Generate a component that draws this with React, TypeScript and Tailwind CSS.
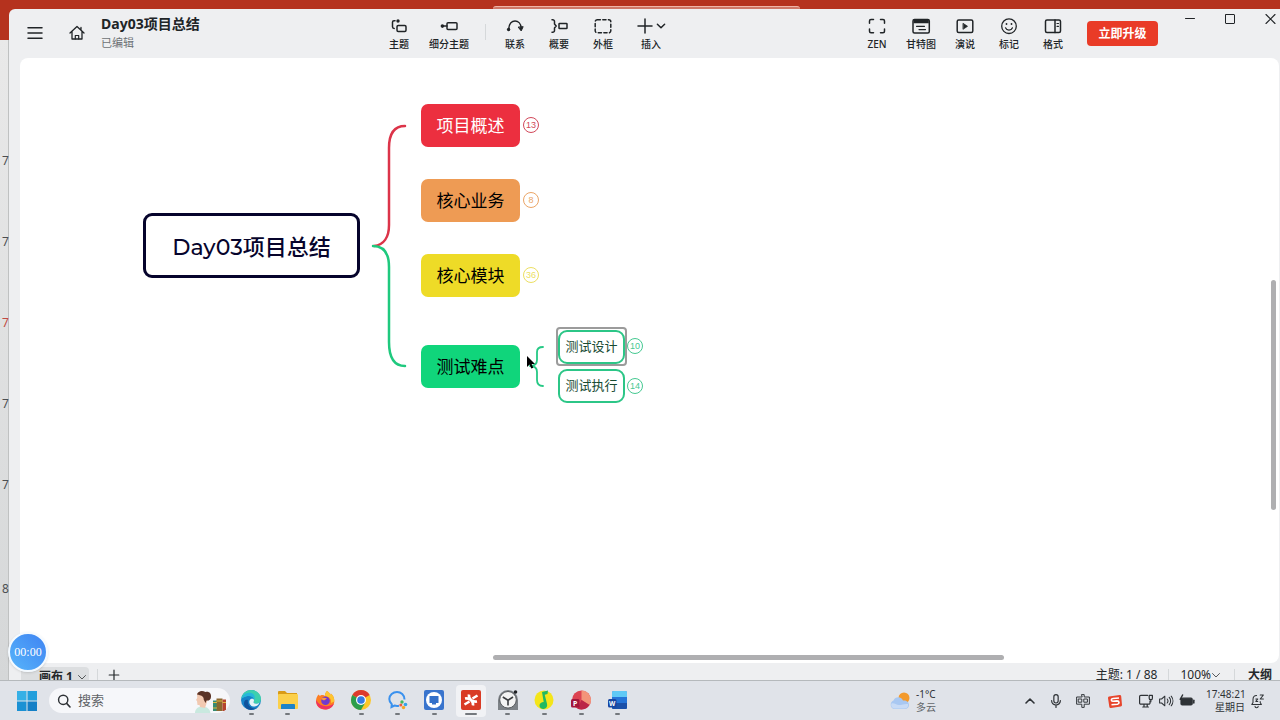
import type { ReactNode } from "react";

const rowNumbers = ["7", "7", "7", "7", "7"];

const branches = [
  { title: "项目概述", count: 13, box: "top-[46px] bg-[#ec2f3f] text-white", badge: "top-[59px] border-[#d2485a] text-[#d2485a]" },
  { title: "核心业务", count: 8, box: "top-[121px] bg-[#ee9b54] text-black", badge: "top-[134px] border-[#eba567] text-[#eba567]" },
  { title: "核心模块", count: 36, box: "top-[196px] bg-[#eedb27] text-black", badge: "top-[209px] border-[#ecdf62] text-[#ecdf62]" },
  { title: "测试难点", count: 0, box: "top-[287px] bg-[#10d57b] text-black", badge: "" },
];

const children = [
  { title: "测试设计", count: 10, box: "top-[272px]", badge: "top-[280px]" },
  { title: "测试执行", count: 14, box: "top-[311px]", badge: "top-[320px]" },
];

function Icon({ children, className = "size-5" }: { children: ReactNode; className?: string }) {
  return (
    <svg
      viewBox="0 0 20 20"
      className={className}
      fill="none"
      stroke="currentColor"
      strokeWidth="1.5"
      strokeLinecap="round"
      strokeLinejoin="round"
      aria-hidden="true"
    >
      {children}
    </svg>
  );
}

function Tool({ label, width = "w-11", children }: { label: string; width?: string; children: ReactNode }) {
  return (
    <button type="button" className={`${width} flex shrink-0 flex-col items-center text-[#202427]`}>
      <span className="flex h-5 items-center">{children}</span>
      <span className="text-[10px] leading-4 font-medium whitespace-nowrap">{label}</span>
    </button>
  );
}

function Header() {
  return (
    <header className="flex h-[49px] shrink-0 items-start text-[#202427]">
      <div className="flex h-12 w-[370px] shrink-0 items-center pl-4">
        <button type="button" aria-label="Menu">
          <Icon>
            <path d="M3 4.700h14M3 10h14M3 15.200h14" />
          </Icon>
        </button>
        <button type="button" aria-label="Home" className="ml-[22px]">
          <Icon>
            <path d="M3 10 10 3.500l7 6.500M5 8.500V16h10V8.500M14 4.500v2.200" strokeWidth="1.300" />
            <path d="M8.300 16v-3.500h3.400V16" strokeWidth="1.200" />
          </Icon>
        </button>
        <div className="ml-[14px] pb-px">
          <h1 className="text-sm leading-5 font-bold whitespace-nowrap">Day03项目总结</h1>
          <p className="text-[11px] leading-[18px] text-[#6d7275]">已编辑</p>
        </div>
      </div>

      <nav className="flex shrink-0 pt-[7px]">
        <Tool label="主题" width="w-10">
          <Icon>
            <rect x="8" y="9.500" width="9" height="6" rx="1.200" />
            <path d="M6 4.800H5A1.500 1.500 0 0 0 3.500 6.300v4.500A1.700 1.700 0 0 0 5.200 12.500" />
            <circle cx="9" cy="5" r="1.700" fill="currentColor" stroke="none" />
          </Icon>
        </Tool>
        <Tool label="细分主题" width="w-15">
          <Icon>
            <rect x="8" y="6.800" width="10" height="6.600" rx="1" />
            <path d="M4 10.100h4" />
            <circle cx="3.400" cy="10.100" r="1.800" fill="currentColor" stroke="none" />
          </Icon>
        </Tool>
        <span className="mr-[7px] ml-[6px] mt-2 h-4 w-px bg-[#d5d8da]" />
        <Tool label="联系">
          <Icon>
            <path d="M3.800 12.500C4.500 2.500 15.500 2.500 16.200 12" />
            <path d="m13.400 11.400 2.800 3.500 1.800-3.900z" fill="currentColor" strokeWidth="1" />
            <circle cx="3.600" cy="13.500" r="1.700" fill="currentColor" stroke="none" />
          </Icon>
        </Tool>
        <Tool label="概要">
          <Icon>
            <path d="M3 3.800h.7A1.800 1.800 0 0 1 5.500 5.600v2.500L7.200 10l-1.700 1.900v2.500a1.800 1.800 0 0 1-1.800 1.800H3" />
            <rect x="10" y="7.500" width="8" height="5" rx=".6" />
          </Icon>
        </Tool>
        <Tool label="外框">
          <Icon>
            <rect x="2.200" y="3.800" width="15.600" height="13" rx="2" strokeDasharray="3.200 2.400" />
          </Icon>
        </Tool>
        <Tool label="插入" width="w-[52px]">
          <span className="flex items-center">
            <Icon>
              <path d="M10 3v14M3 10h14" />
            </Icon>
            <Icon className="size-3">
              <path d="m4 7 6 6 6-6" strokeWidth="2.500" />
            </Icon>
          </span>
        </Tool>
      </nav>

      <div className="ml-auto flex shrink-0 items-start">
        <div className="flex pt-[7px]">
          <Tool label="ZEN">
            <Icon>
              <path d="M2.500 7.200V5a1.500 1.500 0 0 1 1.500-1.500h2.500M13.500 3.500H16A1.500 1.500 0 0 1 17.500 5v2.200M17.500 13v2.200a1.500 1.500 0 0 1-1.500 1.500h-2.500M6.500 16.700H4a1.500 1.500 0 0 1-1.500-1.500V13" />
            </Icon>
          </Tool>
          <Tool label="甘特图">
            <Icon>
              <rect x="2" y="3.500" width="16.300" height="13.500" rx="1.500" />
              <path d="M2.500 4h15.300v3.200H2.500z" fill="currentColor" stroke="none" />
              <path d="M5.500 10.300h8M8 13.600h6.500" strokeWidth="1.200" />
            </Icon>
          </Tool>
          <Tool label="演说">
            <Icon>
              <rect x="2.200" y="4" width="15.600" height="12.600" rx="1.500" />
              <path d="m8.300 7.500 4.200 2.800-4.200 2.800z" fill="currentColor" strokeWidth=".8" />
            </Icon>
          </Tool>
          <Tool label="标记">
            <Icon>
              <circle cx="10" cy="10.200" r="7.300" strokeWidth="1.300" />
              <path d="M6.500 11.800a3.800 3.800 0 0 0 7 0" strokeWidth="1.200" />
              <circle cx="7.500" cy="8" r=".9" fill="currentColor" stroke="none" />
              <circle cx="12.500" cy="8" r=".9" fill="currentColor" stroke="none" />
            </Icon>
          </Tool>
          <Tool label="格式">
            <Icon>
              <rect x="2.500" y="4" width="15" height="12.600" rx="1.500" />
              <path d="M12 4v12.600" />
              <path d="M14 7.500h1.500M14 10.300h1.500" strokeWidth="1.200" />
            </Icon>
          </Tool>
        </div>
        <button type="button" className="mt-3 ml-3 h-[25px] w-[71px] rounded-[4px] bg-[#e93b27] text-xs font-bold text-white">
          立即升级
        </button>
        <div className="ml-[22px] flex gap-5">
          <button type="button" aria-label="Minimize">
            <Icon>
              <path d="M5.500 9.500h9" strokeWidth="1" />
            </Icon>
          </button>
          <button type="button" aria-label="Maximize">
            <Icon>
              <rect x="5.500" y="5.500" width="9" height="9" rx=".5" strokeWidth="1" />
            </Icon>
          </button>
          <button type="button" aria-label="Close">
            <Icon>
              <path d="m6 5.500 9 9m0-9-9 9" strokeWidth="1.100" />
            </Icon>
          </button>
        </div>
      </div>
    </header>
  );
}

function MindMap() {
  return (
    <main className="relative mr-px ml-[11px] min-h-0 flex-1 overflow-hidden rounded-lg bg-white">
      <svg className="absolute inset-0 size-full" fill="none" strokeWidth="2.500" strokeLinecap="round" aria-hidden="true">
        <path d="M354 188C364 187 369 179 369 167V90C369 76 374 68 385 68" stroke="#dc3449" />
        <path d="M353 188C364 188 369 196 369 209V284C369 300 374 308 385 308" stroke="#1fc97e" />
        <path
          d="M510 308C515 308 517 306 517 302V294C517 291 519 289 523 289M510 308C515 308 517 310 517 314V322C517 326 519 328 523 328"
          stroke="#26c985"
          strokeWidth="1.800"
        />
      </svg>

      <div className="absolute top-[155px] left-[123px] flex h-[65px] w-[217px] items-center justify-center rounded-[9px] border-3 border-[#06042c] pt-[3px] font-[Montserrat,Inter,'Noto_Sans_CJK_SC',sans-serif] text-[22px] font-medium whitespace-nowrap text-[#06042c]">
        Day03项目总结
      </div>

      {branches.map((b) => (
        <div key={b.title}>
          <div className={`${b.box} absolute left-[401px] flex h-[43px] w-[99px] items-center justify-center rounded-[7px] pt-px text-[17px]`}>
            {b.title}
          </div>
          {b.count > 0 && (
            <button
              type="button"
              className={`${b.badge} absolute left-[503px] flex size-4 items-center justify-center rounded-full border font-['Liberation_Sans',sans-serif] text-[9px] leading-none`}
            >
              {b.count}
            </button>
          )}
        </div>
      ))}

      <div className="absolute top-[269px] left-[536px] h-[39px] w-[71px] rounded-[4px] border-2 border-[#9b9b9b]" />
      {children.map((c) => (
        <div key={c.title}>
          <div className={`${c.box} absolute left-[538px] flex h-[34px] w-[67px] items-center justify-center rounded-[9px] border-2 border-[#2cc687] bg-white text-[13px] text-[#174b32]`}>
            {c.title}
          </div>
          <button
            type="button"
            className={`${c.badge} absolute left-[607px] flex size-4 items-center justify-center rounded-full border border-[#45c991] font-['Liberation_Sans',sans-serif] text-[9px] leading-none text-[#45c991]`}
          >
            {c.count}
          </button>
        </div>
      ))}

      {/* mouse pointer */}
      <svg viewBox="0 0 10 15" className="absolute top-[297px] left-[506px] h-[15px] w-[10px]" aria-hidden="true">
        <path d="M1 1v11l2.600-2.400 1.700 4 2-.9-1.700-3.800H9z" fill="#000" />
      </svg>

      <div className="absolute top-[222px] right-[3px] h-[230px] w-[5px] rounded-full bg-[#afafb1]" />
      <div className="absolute bottom-[3px] left-[473px] h-[5px] w-[511px] rounded-full bg-[#afafb1]" />
    </main>
  );
}

function SheetBar() {
  return (
    <footer className="h-[17px] shrink-0 overflow-hidden text-xs text-[#24282b]">
      <div className="flex h-6 items-center pr-2 pl-3">
        <button type="button" className="mt-1 flex h-5 w-[68px] items-center gap-1 rounded-t-sm bg-[#dcdee0] pl-[18px] leading-4 font-bold whitespace-nowrap">
          画布 1
          <Icon className="size-[10px]">
            <path d="m3 7 7 7 7-7" />
          </Icon>
        </button>
        <span className="ml-2 h-3 w-px bg-[#d5d8da]" />
        <button type="button" aria-label="Add sheet" className="ml-2">
          <Icon className="size-4">
            <path d="M10 4v12M4 10h12" />
          </Icon>
        </button>
        <span className="ml-auto leading-4">主题: 1 / 88</span>
        <span className="mx-[11px] h-3 w-px bg-[#d5d8da]" />
        <button type="button" className="flex items-center leading-4">
          100%
          <Icon className="size-[10px]">
            <path d="m3 7 7 7 7-7" />
          </Icon>
        </button>
        <span className="mx-[13px] h-3 w-px bg-[#d5d8da]" />
        <button type="button" className="leading-4 font-bold">大纲</button>
      </div>
    </footer>
  );
}

const apps = [
  {
    name: "Edge",
    running: true,
    icon: (
      <>
        <circle cx="10" cy="10" r="10" fill="#1682c9" />
        <path d="M.3 9C1 3.500 5 0 10 0c6 0 10 4.200 10 8.700 0 3-2 5-4.600 5-2.200 0-3.500-1-2.500-2.500C13.600 8 11.500 6 8.200 6 4 6 1 8 .3 9z" fill="#3dd0ae" />
        <path d="M.3 9C1.500 4.500 5 2.500 8.800 2.700 13 3 15 6.500 13 10.500 13 7.500 11 6 8.200 6 4 6 1 8 .3 9z" fill="#25b6dc" />
        <path d="M7 10c-1 4 2 8.500 7 8.400 1.500 0 3-1 4-2.400C16.500 18.600 13.500 20 10 20 6 20 3 17 3 13.500S5 9 7 10z" fill="#10529c" />
        <path d="M12.900 11.200c-1 1.500.3 2.500 2.500 2.500 1.200 0 2.300-.4 3.200-1.200-1 3.300-4 4.500-6.600 4-3-.6-4.600-4-3.200-6.500 1-1.800 4-1.600 4.200.2z" fill="#e6f3f8" />
      </>
    ),
  },
  {
    name: "Explorer",
    running: true,
    icon: (
      <>
        <path d="M0 2a1 1 0 0 1 1-1h6l2 2h10v5H0z" fill="#d99b16" />
        <rect y="4" width="20" height="15" rx="1" fill="#fbd04b" />
        <path d="M3 15a1 1 0 0 1 1-1h12a1 1 0 0 1 1 1v4H3z" fill="#1c83c9" />
      </>
    ),
  },
  {
    name: "Firefox",
    running: false,
    icon: (
      <>
        <path d="M12 1c2 1 3 3 3.400 4 .6-.5.400-1.500.4-1.500C18 5 19.500 8 19.300 11.500 19 16 15 19.500 10.300 19.500 5 19.500 1 16 1 11c0-3 1.300-5 2.500-6.500L5 6c1-1.500 4-1 5 0 0-2 .6-4 2-5z" fill="#fd7e23" />
        <path d="M1 10c0 6 4 9.500 9.300 9.500 4 0 7.500-2.500 8.600-6C13 18 5 17 1 10z" fill="#ee3262" />
        <path d="M12 1c2 1 3 3 3.400 4 .6-.5.400-1.500.4-1.500C18 5 19.500 8 19.300 11.500L16 13c.5-4-1-6-6-7 0-2 .6-4 2-5z" fill="#fdc530" />
        <circle cx="10.500" cy="10.800" r="4.300" fill="#7139cf" />
        <path d="M6 9c2-2 4-1.500 6-.5L9 10.500z" fill="#ff9a3c" />
      </>
    ),
  },
  {
    name: "Chrome",
    running: true,
    icon: (
      <>
        <circle cx="10" cy="10" r="10" fill="#fcc728" />
        <path d="M10 10 1.340 5A10 10 0 0 1 18.660 5z" fill="#dd3b2d" />
        <path d="M10 10 1.340 5A10 10 0 0 0 10 20l4.300-7.500z" fill="#2b9e4b" />
        <circle cx="10" cy="10" r="5" fill="#fff" />
        <circle cx="10" cy="10" r="3.800" fill="#367be2" />
      </>
    ),
  },
  {
    name: "WeCom",
    running: true,
    icon: (
      <>
        <path d="M16.500 9.500C16.500 5 13 2 9 2S1.300 5 1.300 9c0 2 1 4 2.500 5.300L3.500 17l3-1.500c1.500.5 3 .5 4.500.2" fill="none" stroke="#3a91ee" strokeWidth="2" />
        <circle cx="14" cy="12" r="1.700" fill="#41b85c" />
        <circle cx="17.500" cy="14.500" r="1.800" fill="#35a2e8" />
        <circle cx="15.500" cy="17.500" r="1.700" fill="#f5a623" />
        <circle cx="12.800" cy="15" r="1.500" fill="#ec5b3c" />
      </>
    ),
  },
  {
    name: "Classroom",
    running: true,
    icon: (
      <>
        <rect width="20" height="20" rx="2" fill="#3974cd" />
        <circle cx="10" cy="10" r="8" fill="#fff" />
        <path d="M5.500 6h9v7h-9zM8 13h4v1.500H8z" fill="#3470c9" />
      </>
    ),
  },
  {
    name: "Xmind",
    running: true,
    icon: (
      <>
        <rect width="20" height="20" rx="2" fill="#d93b25" />
        <path
          d="M4 8.500C7 8 8.500 9 10 10c1.500 1 3 2 6 1.500M8 4.500c-.5 2.500.5 4 2 5.500s2.500 3 2 5.500M16.500 5.500 11.500 8.500M3.500 14.500l5-3"
          fill="none"
          stroke="#fff"
          strokeWidth="2.600"
        />
      </>
    ),
  },
  {
    name: "Clock",
    running: true,
    icon: (
      <>
        <path d="M0 20V10a10 10 0 0 1 20 0v10z" fill="#7d8287" />
        <circle cx="10" cy="9.800" r="8.300" fill="#f3f3f3" stroke="#55585c" />
        <path d="m4.800 7 5.200 3.200L15 7M10 10v5.500" fill="none" stroke="#3b3d40" strokeWidth="1.600" />
        <circle cx="17.500" cy="2" r="1.800" fill="#202225" />
      </>
    ),
  },
  {
    name: "QQ Music",
    running: true,
    icon: (
      <>
        <circle cx="10" cy="10" r="9.500" fill="#f4e51a" />
        <path d="m8 2 6-1.500-.5 3.500-2.800.8 2.300 9c.7 3-1 5.200-3.500 5.200-2.300 0-4-1.500-4-3.500 0-2.300 2-3.500 4.200-3.500z" fill="#20b961" />
      </>
    ),
  },
  {
    name: "PowerPoint",
    running: true,
    icon: (
      <>
        <circle cx="10.500" cy="10" r="9.500" fill="#dc4352" />
        <path d="M10.500.5a9.500 9.500 0 0 1 8 14.500l-8-5z" fill="#f39479" />
        <path d="m10.500 10 8 5a9.500 9.500 0 0 1-12 3.500z" fill="#bb2546" />
        <rect x="0" y="9" width="8.500" height="8.500" rx="1.500" fill="#a3163b" />
        <text x="2" y="15.700" fontSize="7" fontWeight="700" fill="#fff">P</text>
      </>
    ),
  },
  {
    name: "Word",
    running: true,
    icon: (
      <>
        <rect x="4" y="1" width="15" height="18" rx="1.500" fill="#2574d8" />
        <path d="M5.500 1h12A1.500 1.500 0 0 1 19 2.500V7H4V2.500A1.500 1.500 0 0 1 5.500 1z" fill="#5fc9f6" />
        <path d="M4 13h15v4.500a1.500 1.500 0 0 1-1.500 1.500h-12A1.500 1.500 0 0 1 4 17.500z" fill="#1b50a9" />
        <rect x="0" y="9" width="8.500" height="8.500" rx="1.500" fill="#1745a0" />
        <text x="1" y="15.500" fontSize="6.500" fontWeight="700" fill="#fff">W</text>
      </>
    ),
  },
];

function Taskbar() {
  return (
    <div className="flex h-10 shrink-0 items-center border-t border-[#b5b9bc] bg-[#e0e3e9] pl-[17px] text-[#2e3236]">
      <button type="button" aria-label="Start">
        <svg viewBox="0 0 20 20" className="size-5" aria-hidden="true">
          <path d="M0 0h9.500v9.500H0z" fill="#36b0e6" />
          <path d="M10.500 0H20v9.500h-9.500z" fill="#239fdc" />
          <path d="M0 10.500h9.500V20H0z" fill="#1a91d4" />
          <path d="M10.500 10.500H20V20h-9.500z" fill="#147fc6" />
        </svg>
      </button>
      <label className="ml-3 flex h-[25px] w-[181px] shrink-0 items-center overflow-hidden rounded-full bg-[#f6f7fa] pr-[2px] pl-[7px]">
        <span className="sr-only">搜索</span>
        <Icon className="size-4 shrink-0">
          <circle cx="9" cy="8.500" r="5.800" strokeWidth="1.800" />
          <path d="m13.300 13 4.200 4.500" strokeWidth="2" />
        </Icon>
        <input
          type="search"
          placeholder="搜索"
          className="ml-[6px] w-0 min-w-0 flex-1 bg-transparent text-[13px] outline-none placeholder:text-[#5f6367]"
        />
        <svg viewBox="0 0 34 24" className="h-6 w-[34px] shrink-0" aria-hidden="true">
          <path d="M1 24c0-4 3-6.500 7-6.500s8 2 8.500 6.500z" fill="#c9e9df" />
          <path d="M3 4.500C5 2 10 2 12 5l2 5-3 9-5-1-.5-2H3.500L3 12l-1-1 1.200-2z" fill="#f2c9b1" />
          <path d="M3 5.500C4 2 8 1 11.500 3c3.500-1 6 1.500 5.500 5-.3 3-2.500 4-4.500 3.500L11.500 14l-1.800-3.500C10 7 7 6.500 3 5.500z" fill="#5a3326" />
          <path d="M19 11.500h4V22h-4z" fill="#358c72" />
          <path d="M22.500 9.500h6V22h-6z" fill="#8b6930" />
          <path d="M28.500 10.500H32V22h-3.500z" fill="#b5452f" />
          <path d="M19 13.500h4M22.500 12h6M28.500 13.500H32M19 19h4" stroke="#e0b83e" />
        </svg>
      </label>

      <div className="ml-[3px] grid h-full w-[403px] shrink-0 grid-cols-11">
        {apps.map((app) => (
          <button
            key={app.name}
            type="button"
            aria-label={app.name}
            className="flex flex-col items-center justify-center"
          >
            <span className={`${app.name === "Xmind" ? "bg-[#f1f2f5]" : ""} flex h-8 w-[30px] flex-col items-center rounded-sm pt-[5px]`}>
              <svg viewBox="0 0 20 20" className="size-5 shrink-0" aria-hidden="true">
                {app.icon}
              </svg>
              {app.running && (
                <span className={`${app.name === "Xmind" ? "w-3" : "w-[5px]"} mt-[3px] h-[2px] shrink-0 rounded-full bg-[#74787d]`} />
              )}
            </span>
          </button>
        ))}
      </div>

      <button type="button" className="ml-auto flex items-center gap-[5px] text-left text-[10px] leading-[13px]">
        <svg viewBox="0 0 22 20" className="h-5 w-[22px]" aria-hidden="true">
          <circle cx="15" cy="7" r="5.500" fill="#f39a2d" />
          <path d="M5 18a4.500 4.500 0 0 1-.5-8.500C6 5.500 12 5 14 9.500c3-.5 6 1 6 4.500 0 2.500-2 4-4 4z" fill="#a9c8f2" />
          <path d="M5 17.500a3.500 3.500 0 0 1-2.500-5c2.500-1 4.500 1.500 7.500 1.500s6-1.500 9-1c.5 3-1 4.500-3.500 4.500z" fill="#c8dbf6" />
        </svg>
        <span>
          <span className="block">-1°C</span>
          <span className="block text-[#63676b]">多云</span>
        </span>
      </button>

      <div className="ml-[86px] flex items-center">
        <button type="button" aria-label="Show hidden icons">
          <Icon className="size-4">
            <path d="m5 12.500 5-5 5 5" strokeWidth="2" />
          </Icon>
        </button>
        <button type="button" aria-label="Microphone" className="ml-[10px]">
          <Icon className="size-4">
            <rect x="7.300" y="2" width="5.400" height="10.500" rx="2.700" />
            <path d="M4.500 9.500a5.500 5.500 0 0 0 11 0M10 15v3" />
          </Icon>
        </button>
        <button type="button" aria-label="输入法" className="ml-[11px]">
          <Icon className="size-4">
            <path d="M8.500 2h3v3H18v9h-6.500v4h-3v-4H2V5h6.500zM4.500 7.500h4v4h-4zM11.500 7.500h4v4h-4z" strokeWidth="1.200" />
          </Icon>
        </button>
        <button type="button" aria-label="Sogou" className="ml-4">
          <svg viewBox="0 0 16 16" className="size-4" aria-hidden="true">
            <path d="M2 3.500 12.500 2a1.500 1.500 0 0 1 1.700 1.300L15 12a1.500 1.500 0 0 1-1.300 1.600L4 15a1.500 1.500 0 0 1-1.700-1.300L1 5a1.500 1.500 0 0 1 1-1.500z" fill="#e7452c" />
            <path d="M12 5 6 5.500C3.500 5.800 4 8.300 6 8.200l4-.3c2.500 0 2.700 3 .5 3.300l-6 .6" fill="none" stroke="#fff" strokeWidth="1.600" />
          </svg>
        </button>
        <button type="button" aria-label="Network" className="ml-[15px]">
          <Icon className="size-4">
            <path d="M12 3H3.500A1.500 1.500 0 0 0 2 4.500v8A1.500 1.500 0 0 0 3.500 14h10a1.500 1.500 0 0 0 1.500-1.500V10M6 17.500h7M7.500 14v3.500M11.500 14v3.500" />
            <path d="M14 3h4v3.500a1.500 1.500 0 0 1-4 0zM16 8v3" />
          </Icon>
        </button>
        <button type="button" aria-label="Volume" className="ml-1">
          <Icon className="size-4">
            <path d="M2 7.500h2.500L8.500 4v12l-4-3.500H2zM11.500 7.500a4 4 0 0 1 0 5M14 5.500a6.500 6.500 0 0 1 0 9M16.500 4a9.500 9.500 0 0 1 0 12" strokeWidth="1.300" />
          </Icon>
        </button>
        <button type="button" aria-label="Battery" className="ml-[5px]">
          <Icon className="size-4">
            <rect x="2.500" y="6.500" width="14" height="8.500" rx="1.500" fill="currentColor" />
            <path d="M18.500 9v3.500" strokeWidth="2" />
            <path d="M4.500 2.500 1.500 8h3l-1 4" strokeWidth="1.800" />
          </Icon>
        </button>
        <button type="button" className="ml-[11px] w-[39px] text-right text-[10px] leading-[13px] whitespace-nowrap">
          <span className="block">17:48:21</span>
          <span className="block">星期日</span>
        </button>
        <button type="button" aria-label="Notifications" className="mr-[15px] ml-1">
          <Icon className="size-4">
            <path d="M9.500 3C6.500 3 5 5.500 5 8v4l-1.500 2.500h12L14 12v-1.500M7.500 16.500a2 2 0 0 0 4 0M14 2.500h4l-4 5h4M8.500 7.500h2.500l-2.500 3h2.500" strokeWidth="1.300" />
          </Icon>
        </button>
      </div>
    </div>
  );
}

export default function App() {
  return (
    <div className="flex h-screen flex-col overflow-hidden font-['Noto_Sans','Noto_Sans_CJK_SC',sans-serif]">
      <div className="relative flex min-h-0 flex-1 flex-col bg-[#b5321e]">
        <div className="flex h-[9px] shrink-0 items-end justify-center pl-3">
          <div className="h-[3px] w-[307px] rounded-t-sm border-t border-[#efb5a8] bg-[#cf7767]" />
        </div>
        <div className="flex min-h-0 flex-1">
          <aside className="w-[9px] shrink-0 overflow-hidden pt-[31px] text-xs text-[#4c4f52]">
            <div className="h-full border-r border-[#bfc1c1] bg-linear-to-b from-[#e9e9e9] to-[#d5d7d8] pt-20 pl-[2px]">
              {rowNumbers.map((n, i) => (
                <div key={i} className={`${i === 2 ? "text-[#c14a43]" : ""} flex h-[81px] items-center`}>
                  {n}
                </div>
              ))}
              <div className="flex h-[127px] items-center">8</div>
            </div>
          </aside>
          <div className="flex min-w-0 flex-1 flex-col overflow-hidden rounded-tl-md bg-[#eeeff1]">
            <Header />
            <MindMap />
            <SheetBar />
          </div>
        </div>

        {/* floating recorder timer */}
        <button
          type="button"
          className="absolute bottom-2 left-2 flex size-10 items-center justify-center rounded-full border-2 border-[#f4faff] bg-linear-to-bl from-[#3f83f2] to-[#58b4fa] font-['Liberation_Serif',serif] text-xs text-white shadow-sm"
        >
          00:00
        </button>
      </div>
      <Taskbar />
    </div>
  );
}
